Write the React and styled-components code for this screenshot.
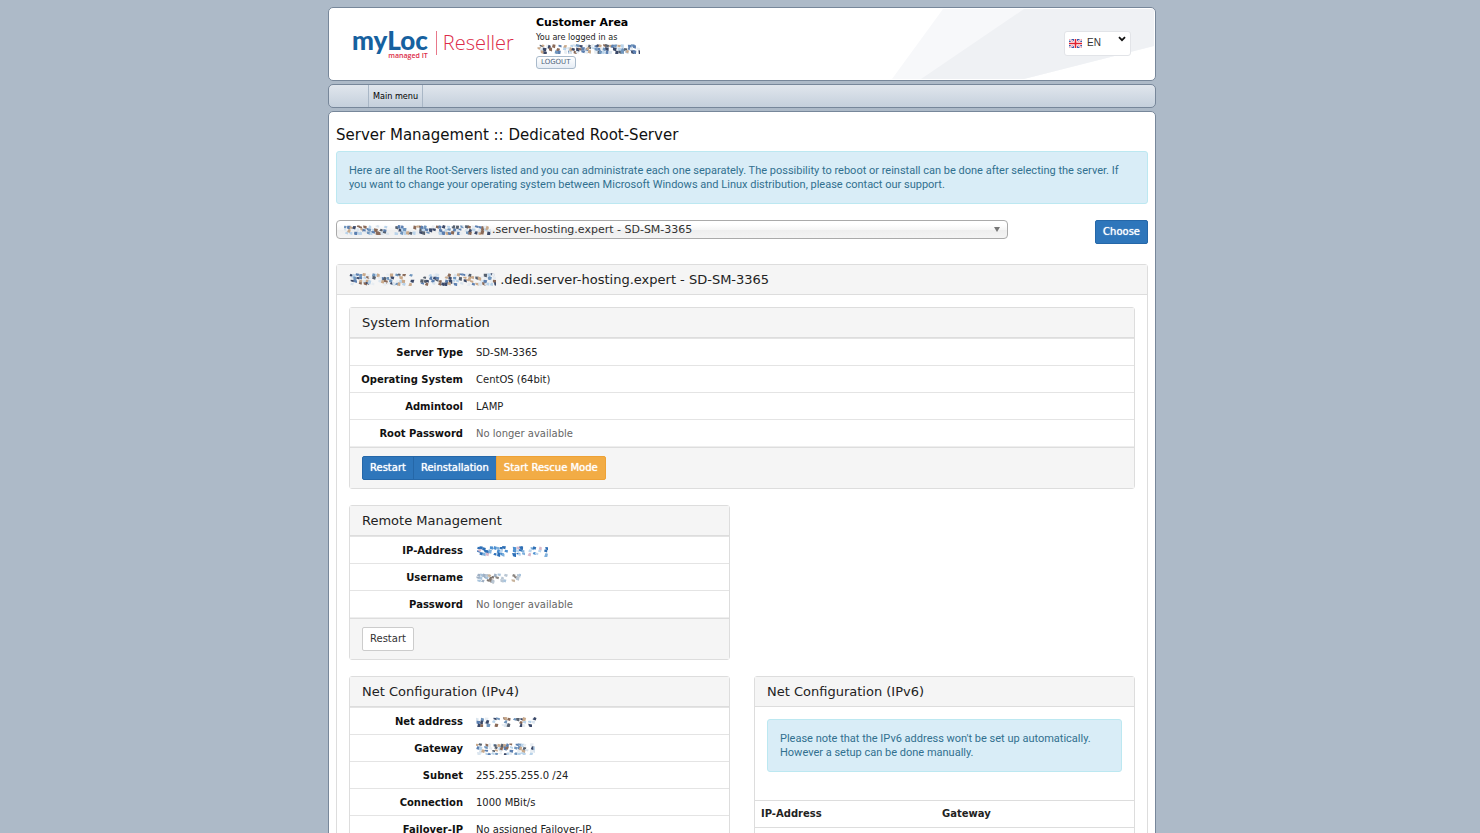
import React from 'react';
import styled, { createGlobalStyle } from 'styled-components';

const GlobalStyle = createGlobalStyle`
  * {
    box-sizing: border-box;
  }

  body {
    margin: 0;
    background: #adbac8;
    color: #222;
    font-family: Verdana, 'DejaVu Sans', sans-serif;
    font-size: 10px;
    line-height: 14px;
  }

  button,
  select {
    font-family: inherit;
    font-size: inherit;
    line-height: inherit;
  }
`;

const Page = styled.div`
  padding: 7px 8px 16px 12px;
`;

const Wrapper = styled.div`
  display: flex;
  flex-direction: column;
  gap: 3px;
  max-width: 828px;
  margin: 0 auto;
`;

const Header = styled.header`
  position: relative;
  display: flex;
  align-items: flex-start;
  padding: 8px 24px 11px 23px;
  background: #fff;
  border: 1px solid #77879a;
  border-radius: 5px;
  overflow: hidden;
`;

const HeaderArt = styled.svg`
  position: absolute;
  top: 1px;
  right: 1px;
  width: 262px;
  height: 70px;
`;

const Logo = styled.a`
  display: flex;
  width: 184px;
  padding-top: 13px;
  text-decoration: none;
  font-family: 'Open Sans', sans-serif;
`;

const LogoMark = styled.span`
  display: flex;
  flex-direction: column;
  align-items: flex-end;
  padding-right: 8px;
  color: #16619f;
  font-family: Lato, sans-serif;
  font-size: 26px;
  font-weight: 900;
  line-height: 22px;
`;

const LogoTag = styled.small`
  color: #dc2c48;
  font-family: 'Open Sans', sans-serif;
  font-size: 7px;
  font-weight: 600;
  line-height: 9px;
`;

const LogoProduct = styled.span`
  align-self: flex-start;
  margin-top: 2px;
  padding-left: 6px;
  border-left: 1px solid #e8788a;
  color: #dc2c48;
  font-size: 20px;
  font-weight: 300;
  line-height: 24px;
`;

const Account = styled.div`
  display: flex;
  flex-direction: column;
  align-items: flex-start;
  flex: 1;
  color: #222;
  font-family: Tahoma, 'DejaVu Sans Condensed', sans-serif;
  font-size: 9px;
`;

const AccountTitle = styled.strong`
  color: #000;
  font-family: Verdana, 'DejaVu Sans', sans-serif;
  font-size: 11px;
`;

const LogoutButton = styled.button`
  height: 13px;
  margin-top: 2px;
  padding: 0 4px;
  background: linear-gradient(#fff, #e6edf5);
  border: 1px solid #a9bacb;
  border-radius: 3px;
  color: #51667d;
  font-family: Verdana, 'DejaVu Sans', sans-serif;
  font-size: 7px;
  line-height: 11px;
`;

const Language = styled.label`
  position: relative;
  display: block;
  margin-top: 15px;

  svg {
    position: absolute;
    pointer-events: none;
  }
`;

const LanguageSelect = styled.select`
  appearance: none;
  display: block;
  width: 67px;
  height: 25px;
  padding: 0 16px 2px 22px;
  background: #fff;
  border: 1px solid #e2e4e8;
  border-radius: 3px;
  color: #333;
  font-family: 'Liberation Sans', Arial, sans-serif;
`;

const Flag = styled.svg`
  top: 8px;
  left: 5px;
`;

const Chevron = styled.svg`
  top: 5px;
  right: 5px;
`;

const Nav = styled.nav`
  display: flex;
  height: 24px;
  padding-left: 39px;
  background: linear-gradient(#e0e6ed, #c5d0dc);
  border: 1px solid #77879a;
  border-radius: 5px;
`;

const NavLink = styled.a`
  padding: 0 4px;
  border: solid #a9b7c6;
  border-width: 0 1px;
  color: #000;
  font-family: Tahoma, 'DejaVu Sans Condensed', sans-serif;
  font-size: 9px;
  line-height: 22px;
  text-decoration: none;
`;

const Main = styled.main`
  padding: 15px 7px 12px;
  background: #fff;
  border: 1px solid #77879a;
  border-radius: 5px;
`;

const Title = styled.h1`
  margin: 0 0 8px;
  color: #111;
  font-size: 15px;
  font-weight: 400;
  line-height: 16px;
`;

const Alert = styled.p`
  margin: 0 0 16px;
  padding: 12px 12px 11px;
  background: #d9edf7;
  border: 1px solid #bce8f1;
  border-radius: 3px;
  color: #31708f;
  font-family: Roboto, sans-serif;
  font-size: 11px;
`;

const ServerForm = styled.form`
  display: flex;
  align-items: flex-start;
  justify-content: space-between;
  gap: 24px;
  margin-bottom: 20px;
`;

const ServerPicker = styled.label`
  position: relative;
  flex: 0 1 672px;
`;

const ServerSelect = styled.select`
  appearance: none;
  display: block;
  width: 100%;
  height: 19px;
  padding: 0 24px 0 155px;
  background: linear-gradient(#fff 20%, #f6f6f6 50%, #eee 52%, #f4f4f4 100%);
  border: 1px solid #aaa;
  border-radius: 4px;
  color: #333;
  font-size: 11px;
`;

const PickerMask = styled.span`
  position: absolute;
  top: 5px;
  left: 8px;
  display: flex;
  pointer-events: none;
`;

const PickerArrow = styled.svg`
  position: absolute;
  top: 7px;
  right: 8px;
  pointer-events: none;
`;

const BUTTON_COLORS = {
  primary: { background: '#2e76bb', border: '#2567a8', text: '#fff' },
  warning: { background: '#f2ac45', border: '#eea236', text: '#fff' },
  plain: { background: '#fff', border: '#ccc', text: '#333' },
};

const Button = styled.button`
  height: 24px;
  padding: 0 7px;
  background: ${({ $kind }) => BUTTON_COLORS[$kind].background};
  border: 1px solid ${({ $kind }) => BUTTON_COLORS[$kind].border};
  border-radius: 2px;
  color: ${({ $kind }) => BUTTON_COLORS[$kind].text};
  text-shadow: ${({ $kind }) => ($kind === 'plain' ? 'none' : '0 0 1px #fff')};
`;

const ButtonGroup = styled.div`
  display: flex;

  ${Button} + ${Button} {
    margin-left: -1px;
    border-top-left-radius: 0;
    border-bottom-left-radius: 0;
  }

  ${Button}:not(:last-child) {
    border-top-right-radius: 0;
    border-bottom-right-radius: 0;
  }
`;

const Panel = styled.section`
  background: #fff;
  border: 1px solid #ddd;
  border-radius: 3px;
`;

const PanelHeading = styled.h2`
  display: flex;
  align-items: center;
  height: 30px;
  margin: 0;
  padding: 0 12px;
  background: #f5f5f5;
  border-bottom: 1px solid #ddd;
  color: #222;
  font-size: 13px;
  font-weight: 400;
  line-height: 16px;
`;

const PanelBody = styled.div`
  padding: 12px;
`;

const PanelFooter = styled.div`
  padding: 8px 12px;
  background: #f5f5f5;
  border-top: 1px solid #ddd;
`;

const Columns = styled.div`
  display: grid;
  grid-template-columns: 1fr 1fr;
  align-items: start;
  gap: 24px;
  margin-top: 16px;
`;

const Details = styled.dl`
  margin: 0;
  border-bottom: 1px solid #eee;
`;

const DetailRow = styled.div`
  display: grid;
  grid-template-columns: 113px 1fr;
  gap: 13px;
  padding: 7px 0 5px;
  border-top: 1px solid #e4e4e4;
`;

const Term = styled.dt`
  color: #111;
  font-weight: 700;
  text-align: right;
`;

const Value = styled.dd`
  display: flex;
  align-items: center;
  margin: 0;
  color: ${({ $muted }) => ($muted ? '#666' : '#222')};
`;

const AddressTable = styled.table`
  width: 100%;
  border-collapse: collapse;
  table-layout: fixed;

  th,
  td {
    height: 27px;
    padding: 0 6px;
    border-top: 1px solid #ddd;
    text-align: left;
  }

  th:first-child {
    width: 181px;
  }
`;

const MASK_COLORS = {
  mixed: ['#3a4868', '#6f95bd', '#b9d3ea', '#8a6a58', '#c9a98a', '#56606e', '#d9e4ee', '#5b7fb0', '#e8edf2'],
  blue: ['#2e6fb5', '#7fb0dc', '#d9b8c9', '#4c8fd0', '#bcd6ee', '#2b6fb8'],
  grey: ['#8a8580', '#a9c4dc', '#7f7670', '#c7b29a', '#b9c6d3', '#9fb0c4'],
};

// Mosaic that hides a private value; spans are [start, width] runs of blocks.
const Mask = ({ spans, height = 9, palette = 'mixed', seed = 1 }) => {
  const colors = MASK_COLORS[palette];
  const [lastX, lastWidth] = spans[spans.length - 1];
  const shapes = [];
  let n = seed * 7919;
  const next = () => {
    n = (n * 16807 + 11) % 2147483647;
    return n / 2147483647;
  };

  next();
  next();
  spans.forEach(([start, width]) => {
    for (let x = start; x < start + width - 1; x += 3) {
      for (let y = 0; y < height - 2; y += 3) {
        if (next() < 0.75) {
          const a = x + next() * 2;
          const b = y + next();
          shapes.push(
            <path
              key={`${x}-${y}`}
              d={`M${a} ${b}l${2 + next() * 2} ${next()}l${next() - 1} ${2 + next() * 2}l-3 -1z`}
              fill={colors[Math.floor(next() * colors.length)]}
            />
          );
        }
      }
    }
  });

  return (
    <svg width={lastX + lastWidth} height={height} aria-hidden="true">
      {shapes}
    </svg>
  );
};

const InfoList = ({ rows }) => (
  <Details>
    {rows.map(({ label, value, muted }) => (
      <DetailRow key={label}>
        <Term>{label}</Term>
        <Value $muted={muted}>{value}</Value>
      </DetailRow>
    ))}
  </Details>
);

const systemRows = [
  { label: 'Server Type', value: 'SD-SM-3365' },
  { label: 'Operating System', value: 'CentOS (64bit)' },
  { label: 'Admintool', value: 'LAMP' },
  { label: 'Root Password', value: 'No longer available', muted: true },
];

const remoteRows = [
  {
    label: 'IP-Address',
    value: <Mask spans={[[0, 16], [17, 16], [36, 12], [53, 19]]} height={11} palette="blue" seed={3} />,
  },
  { label: 'Username', value: <Mask spans={[[0, 30], [34, 11]]} height={11} palette="grey" seed={4} /> },
  { label: 'Password', value: 'No longer available', muted: true },
];

const ipv4Rows = [
  { label: 'Net address', value: <Mask spans={[[0, 12], [16, 18], [37, 24]]} height={10} seed={5} /> },
  { label: 'Gateway', value: <Mask spans={[[0, 35], [38, 12], [54, 5]]} height={12} seed={6} /> },
  { label: 'Subnet', value: '255.255.255.0 /24' },
  { label: 'Connection', value: '1000 MBit/s' },
  { label: 'Failover-IP', value: 'No assigned Failover-IP.' },
];

const App = () => (
  <Page>
    <GlobalStyle />
    <Wrapper>
      <Header>
        <HeaderArt viewBox="0 0 262 70" aria-hidden="true">
          <path d="M51 0H262V37L132 70H0z" fill="#f7f8fa" />
          <path d="M132 0H262V37L132 70H29z" fill="#eff1f4" />
        </HeaderArt>
        <Logo href="#home">
          <LogoMark>
            myLoc
            <LogoTag>managed IT</LogoTag>
          </LogoMark>
          <LogoProduct>Reseller</LogoProduct>
        </Logo>
        <Account>
          <AccountTitle>Customer Area</AccountTitle>
          <span>You are logged in as</span>
          <Mask spans={[[0, 23], [27, 74], [102, 2]]} height={10} seed={7} />
          <LogoutButton type="button">LOGOUT</LogoutButton>
        </Account>
        <Language aria-label="Language">
          <LanguageSelect defaultValue="EN" aria-label="Language">
            <option>EN</option>
            <option>DE</option>
          </LanguageSelect>
          <Flag width="13" height="9" viewBox="0 0 13 9">
            <rect width="13" height="9" fill="#3c58a8" />
            <path d="M0 0L13 9M13 0L0 9" stroke="#fff" strokeWidth="2" />
            <path d="M0 0L13 9M13 0L0 9" stroke="#e0566a" strokeWidth="0.6" />
            <path d="M6.5 0V9M0 4.5H13" stroke="#fff" strokeWidth="3" />
            <path d="M6.5 0V9M0 4.5H13" stroke="#e0202f" strokeWidth="1.6" />
          </Flag>
          <Chevron width="8" height="6" viewBox="0 0 8 6">
            <path d="M1 1.2L4 4.2L7 1.2" fill="none" stroke="#111" strokeWidth="1.8" />
          </Chevron>
        </Language>
      </Header>

      <Nav>
        <NavLink href="#menu">Main menu</NavLink>
      </Nav>

      <Main>
        <Title>Server Management :: Dedicated Root-Server</Title>
        <Alert>
          Here are all the Root-Servers listed and you can administrate each one separately. The
          possibility to reboot or reinstall can be done after selecting the server. If you want to
          change your operating system between Microsoft Windows and Linux distribution, please
          contact our support.
        </Alert>

        <ServerForm onSubmit={(e) => e.preventDefault()}>
          <ServerPicker>
            <ServerSelect aria-label="Server">
              <option>.server-hosting.expert - SD-SM-3365</option>
            </ServerSelect>
            <PickerMask>
              <Mask spans={[[0, 44], [50, 32], [85, 62]]} height={10} seed={8} />
            </PickerMask>
            <PickerArrow width="6" height="6" viewBox="0 0 6 6">
              <path d="M0 0H6L3 5z" fill="#777" />
            </PickerArrow>
          </ServerPicker>
          <Button type="submit" $kind="primary">Choose</Button>
        </ServerForm>

        <Panel>
          <PanelHeading>
            <Mask spans={[[1, 54], [60, 4], [71, 29], [104, 43]]} height={13} seed={9} />
            &nbsp;.dedi.server-hosting.expert - SD-SM-3365
          </PanelHeading>
          <PanelBody>
            <Panel>
              <PanelHeading>System Information</PanelHeading>
              <InfoList rows={systemRows} />
              <PanelFooter>
                <ButtonGroup>
                  <Button type="button" $kind="primary">Restart</Button>
                  <Button type="button" $kind="primary">Reinstallation</Button>
                  <Button type="button" $kind="warning">Start Rescue Mode</Button>
                </ButtonGroup>
              </PanelFooter>
            </Panel>

            <Columns>
              <Panel>
                <PanelHeading>Remote Management</PanelHeading>
                <InfoList rows={remoteRows} />
                <PanelFooter>
                  <Button type="button" $kind="plain">Restart</Button>
                </PanelFooter>
              </Panel>
            </Columns>

            <Columns>
              <Panel>
                <PanelHeading>Net Configuration (IPv4)</PanelHeading>
                <InfoList rows={ipv4Rows} />
              </Panel>
              <Panel>
                <PanelHeading>Net Configuration (IPv6)</PanelHeading>
                <PanelBody>
                  <Alert>
                    Please note that the IPv6 address won't be set up automatically.
                    <br />
                    However a setup can be done manually.
                  </Alert>
                </PanelBody>
                <AddressTable>
                  <thead>
                    <tr>
                      <th>IP-Address</th>
                      <th>Gateway</th>
                    </tr>
                  </thead>
                  <tbody>
                    <tr>
                      <td />
                      <td />
                    </tr>
                  </tbody>
                </AddressTable>
              </Panel>
            </Columns>
          </PanelBody>
        </Panel>
      </Main>
    </Wrapper>
  </Page>
);

export default App;
